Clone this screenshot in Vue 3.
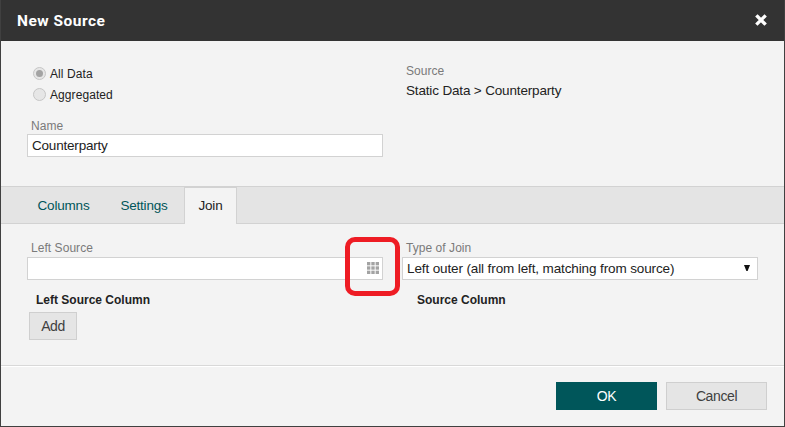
<script setup>
import { ref } from 'vue'

const scope = ref('all')
const scopes = [
  { id: 'all', label: 'All Data' },
  { id: 'aggregated', label: 'Aggregated' },
]
const name = ref('Counterparty')
const leftSource = ref('')
const tabs = ['Columns', 'Settings', 'Join']
const activeTab = ref('Join')
const dots = [0, 4.5, 9]
</script>

<template>
  <div class="dialog">
    <header class="header">
      <h1><span class="title">New Source</span></h1>
      <button class="close" aria-label="Close">
        <svg width="14" height="14" viewBox="0 0 14 14">
          <path d="M3.5 3.5 L10.5 10.5 M10.5 3.5 L3.5 10.5" stroke="#fff" stroke-width="3.3" stroke-linecap="square" fill="none" />
        </svg>
      </button>
    </header>

    <section class="general">
      <div class="general-left">
        <div v-for="s in scopes" :key="s.id" class="radio-row" @click="scope = s.id">
          <span class="radio" :class="{ checked: scope === s.id }"></span>
          <span class="radio-label">{{ s.label }}</span>
        </div>
        <label class="label name-label">Name</label>
        <div class="field"><input v-model="name" class="text-input" /></div>
      </div>
      <div class="general-right">
        <div class="label source-label">Source</div>
        <div class="source-path">Static Data &gt; Counterparty</div>
      </div>
    </section>

    <nav class="tabs">
      <button
        v-for="t in tabs"
        :key="t"
        class="tab"
        :class="[t.toLowerCase(), { active: activeTab === t }]"
        @click="activeTab = t"
      >{{ t }}</button>
    </nav>

    <section class="join-panel">
      <div class="join-fields">
        <div class="join-left">
          <label class="label left-label">Left Source</label>
          <div class="field picker">
            <input v-model="leftSource" class="text-input" />
            <svg class="grid-icon" width="12" height="12" viewBox="0 0 12.5 12.5">
              <template v-for="y in dots" :key="y">
                <rect v-for="x in dots" :key="x" :x="x" :y="y" width="3.5" height="3.5" fill="#a3a3a3" />
              </template>
            </svg>
            <span class="highlight"></span>
          </div>
        </div>
        <div class="join-right">
          <label class="label type-label">Type of Join</label>
          <div class="field select">
            <span class="select-value">Left outer (all from left, matching from source)</span>
            <svg width="6" height="6" viewBox="0 0 6 6"><path d="M0 0H6L3.6 6H2.4Z" fill="#111" /></svg>
          </div>
        </div>
      </div>
      <div class="column-heads">
        <strong class="head-left">Left Source Column</strong>
        <strong class="head-right">Source Column</strong>
      </div>
      <button class="btn add"><span>Add</span></button>
    </section>

    <footer class="footer">
      <button class="btn ok"><span>OK</span></button>
      <button class="btn cancel"><span>Cancel</span></button>
    </footer>
  </div>
</template>

<style>
body {
  overflow: hidden;
}
</style>

<style scoped>
* {
  box-sizing: border-box;
}
.dialog {
  width: 785px;
  height: 427px;
  display: flex;
  flex-direction: column;
  background: #f3f3f3;
  border: 1px solid #404040;
  border-top: 0;
  font-family: "Liberation Sans", Arial, sans-serif;
  font-size: 13.5px;
  letter-spacing: -0.2px;
  color: #222;
}
button,
input {
  font: inherit;
  letter-spacing: inherit;
  color: inherit;
  margin: 0;
  padding: 0;
  border: 0;
  background: none;
}
.header {
  height: 41px;
  flex: none;
  display: flex;
  align-items: center;
  justify-content: space-between;
  padding: 0 16px;
  background: #333;
  color: #fff;
}
h1 {
  margin: 0;
  font-family: Roboto, "Liberation Sans", sans-serif;
  font-size: 15.5px;
  line-height: 20px;
  font-weight: 700;
  letter-spacing: 0.5px;
}
.close {
  display: flex;
  margin-top: -2px;
}
.general {
  height: 145px;
  flex: none;
  display: flex;
}
.general-left {
  width: 375px;
  padding: 22px 0 0 26px;
}
.radio-row {
  height: 21px;
  display: flex;
  align-items: center;
  gap: 4px;
  padding-left: 6px;
}
.radio {
  width: 13px;
  height: 13px;
  border: 1px solid #c6c6c6;
  border-radius: 50%;
  background: #e6e6e6;
  display: flex;
  align-items: center;
  justify-content: center;
}
.radio.checked::after {
  content: "";
  width: 7px;
  height: 7px;
  border-radius: 50%;
  background: #a3a3a3;
}
.radio-label {
  line-height: 20px;
  font-size: 12px;
  letter-spacing: 0.08px;
}
.label {
  display: block;
  font-size: 12px;
  letter-spacing: 0.05px;
  line-height: 16px;
  color: #7a7a7a;
}
.name-label {
  margin: 12px 0 0 4px;
  padding-top: 1px;
  height: 17px;
}
.field {
  width: 356px;
  height: 23px;
  display: flex;
  align-items: center;
  background: #fff;
  border: 1px solid #d2d2d2;
}
.text-input {
  flex: 1;
  min-width: 0;
  height: 21px;
  padding: 0 4px;
  outline: 0;
}
.general-right {
  padding: 22px 0 0 30px;
}
.source-path {
  line-height: 20px;
  margin-top: 2px;
  letter-spacing: -0.16px;
}
.tabs {
  height: 38px;
  flex: none;
  display: flex;
  padding-left: 20px;
  background: #e4e4e4;
  border-top: 1px solid #d2d2d2;
  border-bottom: 1px solid #d2d2d2;
}
.tab {
  height: 37px;
  padding-bottom: 1px;
  border: 1px solid transparent;
  border-bottom: 0;
  color: #00565a;
}
.columns {
  width: 85px;
}
.settings {
  width: 78px;
  padding-right: 2px;
}
.join {
  width: 53px;
}
.tab.active {
  background: #f3f3f3;
  border-color: #d2d2d2;
  color: #222;
}
.join-panel {
  height: 141px;
  flex: none;
  padding: 16px 26px 0;
}
.join-fields {
  display: flex;
  gap: 19px;
}
.join-fields .label {
  margin-left: 4px;
  height: 17px;
}
.picker {
  position: relative;
}
.grid-icon {
  margin: -1px 3px 0 0;
}
.highlight {
  position: absolute;
  left: 317px;
  top: -21px;
  width: 55px;
  height: 59px;
  border: 5px solid #ee1c24;
  border-radius: 10px;
  pointer-events: none;
}
.select {
  justify-content: space-between;
  padding: 0 7px 0 4px;
}
.select svg {
  margin-top: -2px;
}
.select-value {
  line-height: 20px;
  letter-spacing: -0.12px;
}
.column-heads {
  display: flex;
  height: 32px;
  padding: 10px 0 0 9px;
  font-size: 12px;
  letter-spacing: 0;
  line-height: 20px;
}
.head-left {
  width: 381px;
}
.btn {
  height: 28px;
  display: flex;
  align-items: center;
  justify-content: center;
  background: #e5e5e5;
  border: 1px solid #cfcfcf;
  color: #404040;
  font-size: 14px;
  letter-spacing: -0.4px;
  padding-bottom: 1px;
}
.add {
  width: 48px;
  margin-left: 2px;
}
.footer {
  flex: 1;
  display: flex;
  justify-content: flex-end;
  gap: 9px;
  padding: 16px 17px 0 0;
  border-top: 1px solid #d8d8d8;
  box-shadow: inset 0 1px 0 #fff;
}
.footer .btn {
  width: 101px;
}
.footer .ok {
  background: #00565a;
  border-color: #00565a;
  color: #fff;
}
</style>
